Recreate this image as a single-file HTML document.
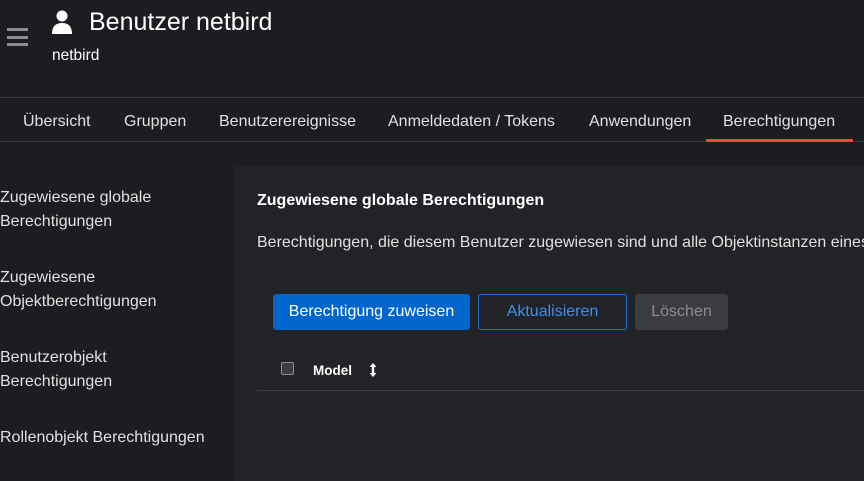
<!DOCTYPE html>
<html><head><style>
*{margin:0;padding:0;box-sizing:border-box}
body{width:864px;height:481px;overflow:hidden;background:#1b1d21;color:#fff;font-family:"Liberation Sans",sans-serif;position:relative}
.a{position:absolute;white-space:nowrap}
.ham{left:7px;width:21px;height:3px;background:#8a8d90}
.tab{top:113px;font-size:16px;color:#e0e0e0}
.side{left:0;font-size:16px;color:#e0e0e0;line-height:24px}
</style></head><body>
<div class="a ham" style="top:28px"></div>
<div class="a ham" style="top:36px"></div>
<div class="a ham" style="top:43px"></div>
<svg class="a" style="left:52px;top:10px" width="20" height="24" viewBox="0 0 20 24"><circle cx="10" cy="6" r="5.5" fill="#fff"/><path d="M0 24 Q0 13 10 13 Q20 13 20 24Z" fill="#fff"/></svg>
<div class="a" style="left:89px;top:8px;font-size:25px">Benutzer netbird</div>
<div class="a" style="left:52px;top:47px;font-size:15.5px">netbird</div>
<div class="a" style="left:0;top:97px;width:864px;height:1px;background:#333538"></div>
<div class="a" style="left:0;top:141px;width:864px;height:1px;background:#333538"></div>
<div class="a tab" style="left:23px">Übersicht</div>
<div class="a tab" style="left:124px">Gruppen</div>
<div class="a tab" style="left:219px">Benutzerereignisse</div>
<div class="a tab" style="left:388px">Anmeldedaten / Tokens</div>
<div class="a tab" style="left:589px">Anwendungen</div>
<div class="a tab" style="left:723px">Berechtigungen</div>
<div class="a" style="left:706px;top:139px;width:147px;height:3px;background:#f0483e"></div>
<div class="a side" style="top:186px">Zugewiesene globale<br>Berechtigungen</div>
<div class="a side" style="top:266px">Zugewiesene<br>Objektberechtigungen</div>
<div class="a side" style="top:346px">Benutzerobjekt<br>Berechtigungen</div>
<div class="a side" style="top:426px">Rollenobjekt Berechtigungen</div>
<div class="a" style="left:234px;top:166px;width:630px;height:315px;background:#212327"></div>
<div class="a" style="left:257px;top:192px;font-size:16px;font-weight:bold">Zugewiesene globale Berechtigungen</div>
<div class="a" style="left:257px;top:234px;font-size:16px;color:#e0e0e0">Berechtigungen, die diesem Benutzer zugewiesen sind und alle Objektinstanzen eines</div>
<div class="a" style="left:273px;top:294px;width:197px;height:36px;background:#0066cc;border-radius:3px;font-size:16px;text-align:center;line-height:36px">Berechtigung zuweisen</div>
<div class="a" style="left:478px;top:294px;width:149px;height:36px;border:1px solid #1f6fd1;border-radius:3px;font-size:16px;color:#3c8ff0;text-align:center;line-height:34px">Aktualisieren</div>
<div class="a" style="left:635px;top:294px;width:93px;height:36px;background:#3a3c40;border-radius:3px;font-size:16px;color:#8a8d90;text-align:center;line-height:36px">Löschen</div>
<div class="a" style="left:281px;top:362px;width:13px;height:13px;border:1px solid #8a8d90;background:#3a3c40;border-radius:2px"></div>
<div class="a" style="left:313px;top:363px;font-size:13.5px;font-weight:bold">Model</div>
<svg class="a" style="left:369px;top:362px" width="8" height="16" viewBox="0 0 8 16"><path d="M4 1L7.5 5H5.2V11H7.5L4 15L0.5 11H2.8V5H0.5Z" fill="#fff"/></svg>
<div class="a" style="left:257px;top:390px;width:607px;height:1px;background:#3a3c40"></div>
</body></html>
